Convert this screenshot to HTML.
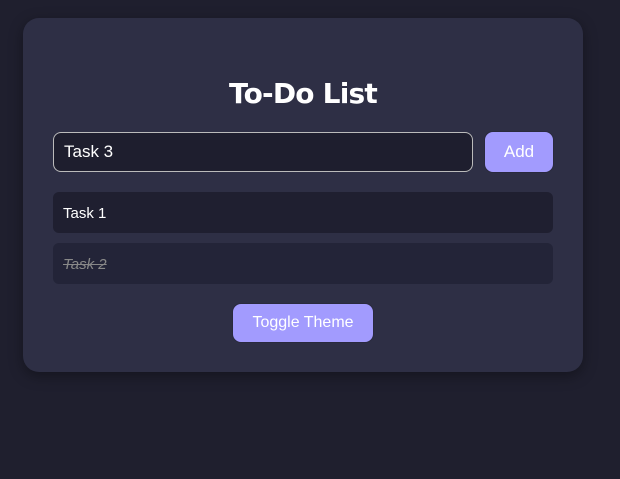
<!DOCTYPE html>
<html><head><style>
body{margin:0;width:620px;height:479px;background:#1f1f2e;font-family:"Liberation Sans",sans-serif;overflow:hidden}
.card{position:absolute;left:23px;top:18px;width:560px;height:354px;background:#2e2f45;border-radius:16px;box-shadow:0 4px 14px rgba(0,0,0,.35)}
h1{position:absolute;left:0;right:14px;top:77px;margin:0;text-align:center;color:#fff;font-size:28px;font-weight:bold;font-family:"DejaVu Sans",sans-serif;letter-spacing:-0.8px}
.in{position:absolute;left:53px;top:132px;width:418px;height:38px;border:1px solid #bbb;border-radius:8px;background:#1e1e2e;color:#fff;font-size:17px;line-height:38px}
.in span{margin-left:10px}
.btn{position:absolute;background:#a29bfe;color:#fff;border-radius:9px;font-size:17px;text-align:center;border:1px solid #2a2a3e}
.item{position:absolute;left:53px;width:500px;height:41px;border-radius:6px;background:#1f1f30;color:#fff;font-size:15px;line-height:43px}
.item span{margin-left:10px}
</style></head><body>
<div class="card"></div>
<h1>To-Do List</h1>
<div class="in"><span>Task 3</span></div>
<div class="btn" style="left:484px;top:131px;width:68px;height:40px;line-height:39px">Add</div>
<div class="item" style="top:192px"><span>Task 1</span></div>
<div class="item" style="top:243px;background:#232438;color:#888;font-style:italic;text-decoration:line-through"><span>Task 2</span></div>
<div class="btn" style="left:232px;top:303px;width:140px;height:38px;line-height:37px;font-size:16px">Toggle Theme</div>
</body></html>
